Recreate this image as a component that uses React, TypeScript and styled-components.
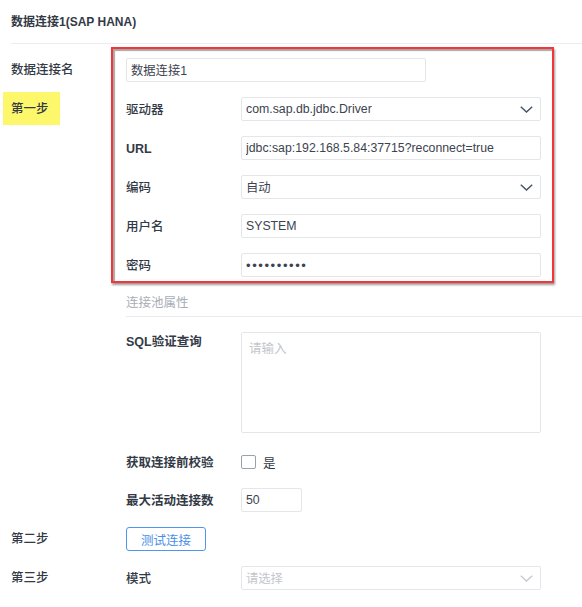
import React from "react";
import styled, { createGlobalStyle } from "styled-components";

const GlobalStyle = createGlobalStyle`
  html, body {
    margin: 0;
    padding: 0;
    background: #ffffff;
  }
  body {
    font-family: "Liberation Sans", "Noto Sans CJK SC", Arial, sans-serif;
    font-size: 12.5px;
    color: #333a46;
  }
  * { box-sizing: border-box; }
`;

const Page = styled.div`
  width: 582px;
  padding-left: 11px;
`;

const Header = styled.div`
  padding: 12px 0 11px;
  line-height: 20px;
  font-size: 12px;
  font-weight: 700;
  color: #333a46;
  border-bottom: 1px solid #ececef;
`;

const Form = styled.div`
  position: relative;
  padding-top: 14px;
  display: flex;
  flex-direction: column;
`;

const Annotation = styled.div`
  position: absolute;
  left: 100px;
  top: 3px;
  width: 443px;
  height: 236px;
  border: 2px solid #f4353a;
  box-shadow: 1px 2px 2px rgba(0, 0, 0, 0.4),
    inset 2px 2px 1px rgba(0, 0, 0, 0.35);
  pointer-events: none;
`;

const Row = styled.div<{ $top?: number; $align?: string }>`
  display: grid;
  grid-template-columns: 115px 115px 300px;
  align-items: ${(p) => p.$align || "center"};
  min-height: 24px;
  margin-top: ${(p) => (p.$top !== undefined ? p.$top : 15)}px;
`;

const Step = styled.div`
  display: flex;
  align-items: center;
  font-weight: 500;
  color: #333a46;
  line-height: 18px;
  height: 24px;
`;

const StepMark = styled.span`
  display: inline-flex;
  align-items: center;
  height: 33px;
  width: 57px;
  margin: -5px 0 -4px -8px;
  padding-left: 8px;
  background: #fcf76b;
`;

const Label = styled.div<{ $bold?: boolean }>`
  font-weight: ${(p) => (p.$bold ? 700 : 500)};
  color: #333a46;
  line-height: 18px;
  padding-top: 1px;
`;

const Wide = styled.div`
  grid-column: 2 / span 2;
  width: 300px;
`;

const Field = styled.input`
  display: block;
  width: 100%;
  height: 24px;
  padding: 0 5px 0 4px;
  border: 1px solid #e4e6ea;
  border-radius: 2px;
  background: #fff;
  font-family: "Liberation Sans", "Noto Sans CJK SC", Arial, sans-serif;
  font-size: 12.3px;
  color: #3c4350;
  outline: none;
  &::placeholder {
    color: #c3c6cd;
  }
`;

const Password = styled(Field)`
  color: #3a4456;
  letter-spacing: 1.6px;
  font-size: 13px;
`;

const SmallField = styled(Field)`
  width: 61px;
`;

const SelectBox = styled.div<{ $placeholder?: boolean }>`
  display: flex;
  align-items: center;
  justify-content: space-between;
  height: 24px;
  padding: 0 7px 0 4px;
  border: 1px solid #e4e6ea;
  border-radius: 2px;
  font-size: 12.3px;
  color: ${(p) => (p.$placeholder ? "#c3c6cd" : "#3c4350")};
`;

const Chevron = styled.svg<{ $light?: boolean }>`
  width: 13px;
  height: 7px;
  fill: none;
  stroke: ${(p) => (p.$light ? "#c8cbd3" : "#4a5467")};
  stroke-width: 1.5;
`;

const TextArea = styled.textarea`
  display: block;
  width: 300px;
  height: 101px;
  padding: 5px 7px;
  border: 1px solid #e4e6ea;
  border-radius: 2px;
  resize: none;
  font-family: "Liberation Sans", "Noto Sans CJK SC", Arial, sans-serif;
  font-size: 12.5px;
  outline: none;
  &::placeholder {
    color: #c3c6cd;
  }
`;

const SectionTitle = styled.div`
  margin-top: 16px;
  margin-left: 115px;
  padding-bottom: 3px;
  line-height: 20px;
  color: #a9adb5;
  border-bottom: 1px solid #e9eaee;
`;

const CheckLine = styled.label`
  display: flex;
  align-items: center;
  gap: 7px;
  color: #333a46;
`;

const CheckBox = styled.span`
  display: inline-block;
  width: 15px;
  height: 14px;
  border: 1px solid #9ba1ab;
  border-radius: 2px;
`;

const Button = styled.button`
  width: 80px;
  height: 24px;
  padding: 0;
  border: 1px solid #4f95ee;
  border-radius: 3px;
  background: #fff;
  color: #4a8fe8;
  font-family: "Liberation Sans", "Noto Sans CJK SC", Arial, sans-serif;
  font-size: 12.5px;
`;

const Down = ({ light }: { light?: boolean }) => (
  <Chevron $light={light} viewBox="0 0 13 7">
    <polyline points="0.8,0.8 6.5,6 12.2,0.8" />
  </Chevron>
);

export default function App() {
  return (
    <>
      <GlobalStyle />
      <Page>
        <Header>数据连接1(SAP HANA)</Header>
        <Form>
          <Annotation />
          <Row $top={0}>
            <Step>数据连接名</Step>
            <Wide>
              <Field defaultValue="数据连接1" readOnly />
            </Wide>
          </Row>
          <Row>
            <Step>
              <StepMark>第一步</StepMark>
            </Step>
            <Label>驱动器</Label>
            <SelectBox>
              <span>com.sap.db.jdbc.Driver</span>
              <Down />
            </SelectBox>
          </Row>
          <Row>
            <Step />
            <Label $bold>URL</Label>
            <Field defaultValue="jdbc:sap:192.168.5.84:37715?reconnect=true" readOnly />
          </Row>
          <Row>
            <Step />
            <Label>编码</Label>
            <SelectBox>
              <span>自动</span>
              <Down />
            </SelectBox>
          </Row>
          <Row>
            <Step />
            <Label>用户名</Label>
            <Field defaultValue="SYSTEM" readOnly />
          </Row>
          <Row>
            <Step />
            <Label>密码</Label>
            <Password type="password" defaultValue="1234567890" readOnly />
          </Row>
          <SectionTitle>连接池属性</SectionTitle>
          <Row $align="start">
            <Step />
            <Label $bold>SQL验证查询</Label>
            <TextArea placeholder="请输入" />
          </Row>
          <Row $top={17}>
            <Step />
            <Label $bold>获取连接前校验</Label>
            <CheckLine>
              <CheckBox />
              是
            </CheckLine>
          </Row>
          <Row $top={14}>
            <Step />
            <Label $bold>最大活动连接数</Label>
            <div>
              <SmallField defaultValue="50" readOnly />
            </div>
          </Row>
          <Row>
            <Step>第二步</Step>
            <div>
              <Button>测试连接</Button>
            </div>
          </Row>
          <Row>
            <Step>第三步</Step>
            <Label>模式</Label>
            <SelectBox $placeholder>
              <span>请选择</span>
              <Down light />
            </SelectBox>
          </Row>
        </Form>
      </Page>
    </>
  );
}
